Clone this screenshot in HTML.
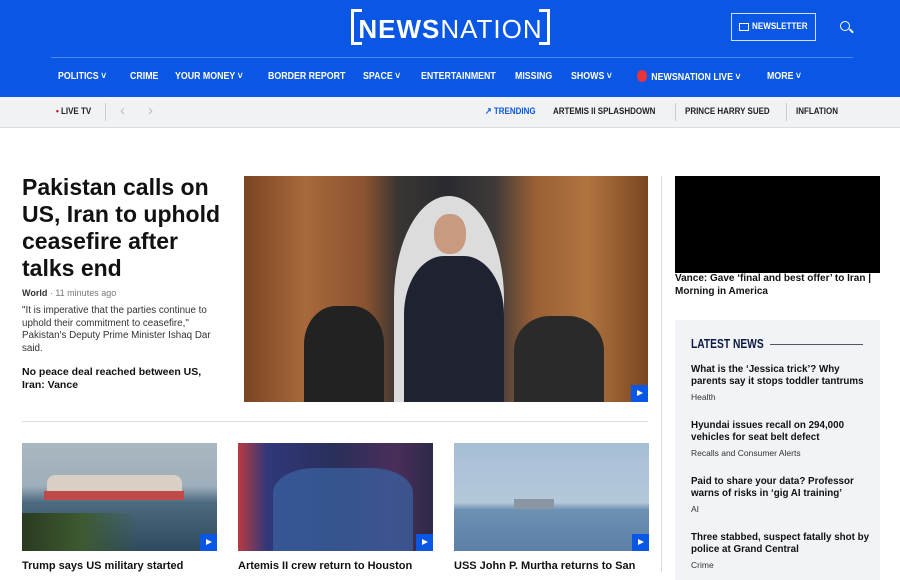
<!DOCTYPE html>
<html><head><meta charset="utf-8"><style>
*{margin:0;padding:0;box-sizing:border-box}
body{width:900px;height:572px;overflow:hidden;background:#fff;font-family:"Liberation Sans",sans-serif;position:relative;color:#111}
.hdr{position:absolute;left:0;top:0;width:900px;height:97px;background:#0a57e6}
.logo{position:absolute;left:351px;top:9px;width:199px;height:36px;border:3px solid #fff;border-top-width:3px}
.logo:before{content:"";position:absolute;left:8px;right:8px;top:-3px;height:3px;background:#0a57e6}
.logo:after{content:"";position:absolute;left:8px;right:8px;bottom:-3px;height:3px;background:#0a57e6}
.logo span{position:absolute;left:0;right:0;top:2px;text-align:center;color:#fff;font-size:26px;letter-spacing:1px;z-index:2}
.nl{position:absolute;left:731px;top:13px;width:85px;height:28px;border:1px solid #cfe0ff}
.nl i{position:absolute;left:20px;top:0;color:#fff;font-size:9.5px;font-weight:bold;line-height:26px;font-style:normal;transform:scaleX(.85);transform-origin:left}
.nl:before{content:"";position:absolute;left:7px;top:9px;width:8px;height:6px;border:1px solid #fff}
.srch{position:absolute;left:840px;top:21px;width:10px;height:10px;border:1.5px solid #fff;border-radius:50%}
.srch:after{content:"";position:absolute;left:8px;top:8px;width:5px;height:1.5px;background:#fff;transform:rotate(45deg)}
.rule{position:absolute;left:51px;top:57px;width:802px;height:1px;background:#4f86f0}
.nav{position:absolute;top:70px;color:#fff;font-size:10.5px;font-weight:bold;white-space:nowrap;transform:scaleX(.84);transform-origin:left}
.bar{position:absolute;left:0;top:97px;width:900px;height:31px;background:#f1f2f4;border-bottom:1px solid #ddd}
.bi{position:absolute;top:106px;font-size:9.5px;font-weight:bold;color:#222;white-space:nowrap;transform:scaleX(.84);transform-origin:left}
h1{position:absolute;left:22px;top:174px;width:200px;font-size:23px;line-height:27px;font-weight:bold;color:#111}
.meta{position:absolute;left:22px;top:288px;font-size:9px;color:#777}
.meta b{color:#333;font-weight:bold}
.dek{position:absolute;left:22px;top:305px;width:204px;font-size:9.8px;line-height:12.5px;color:#333}
.rel{position:absolute;left:22px;top:366px;width:190px;font-size:10.5px;line-height:13px;font-weight:bold}
.ph{position:absolute;overflow:hidden}
.play{position:absolute;right:0;bottom:0;width:17px;height:17px;background:#0a57e6}
.play:after{content:"";position:absolute;left:6px;top:5px;border-left:6px solid #fff;border-top:3.5px solid transparent;border-bottom:3.5px solid transparent}
.cap{position:absolute;top:560px;font-size:11px;font-weight:bold;white-space:nowrap}
.lat{position:absolute;left:675px;top:320px;width:205px;height:260px;background:#f1f3f6}
.li{position:absolute;left:691px;width:180px}
.li b{display:block;font-size:9.8px;line-height:12px;color:#111}
.li span{display:block;font-size:8.5px;color:#333;margin-top:4px}
</style></head><body>
<div class="hdr"></div>
<div class="logo"><span><b>NEWS</b>NATION</span></div>
<div class="nl"><i>NEWSLETTER</i></div>
<div class="srch"></div>
<div class="rule"></div>
<div class="nav" style="left:58px">POLITICS ˅</div>
<div class="nav" style="left:130px">CRIME</div>
<div class="nav" style="left:175px">YOUR MONEY ˅</div>
<div class="nav" style="left:268px">BORDER REPORT</div>
<div class="nav" style="left:363px">SPACE ˅</div>
<div class="nav" style="left:421px">ENTERTAINMENT</div>
<div class="nav" style="left:515px">MISSING</div>
<div class="nav" style="left:571px">SHOWS ˅</div>
<div class="nav" style="left:637px"><span style="display:inline-block;width:12px;height:12px;border-radius:50%;background:#e8343a;vertical-align:-2px;margin-right:5px"></span>NEWSNATION LIVE ˅</div>
<div class="nav" style="left:767px">MORE ˅</div>
<div class="bar"></div>
<div class="bi" style="left:56px"><span style="color:#d00">•</span> LIVE TV</div>
<div style="position:absolute;left:105px;top:103px;width:1px;height:18px;background:#ccc"></div>
<div style="position:absolute;left:120px;top:102px;color:#bbb;font-size:15px">‹</div>
<div style="position:absolute;left:148px;top:102px;color:#bbb;font-size:15px">›</div>
<div class="bi" style="left:485px;color:#0a57e6">↗ TRENDING</div>
<div class="bi" style="left:553px">ARTEMIS II SPLASHDOWN</div>
<div style="position:absolute;left:675px;top:103px;width:1px;height:18px;background:#ccc"></div>
<div class="bi" style="left:685px">PRINCE HARRY SUED</div>
<div style="position:absolute;left:786px;top:103px;width:1px;height:18px;background:#ccc"></div>
<div class="bi" style="left:796px">INFLATION</div>

<h1>Pakistan calls on US, Iran to uphold ceasefire after talks end</h1>
<div class="meta"><b>World</b> · 11 minutes ago</div>
<div class="dek">"It is imperative that the parties continue to uphold their commitment to ceasefire," Pakistan's Deputy Prime Minister Ishaq Dar said.</div>
<div class="rel">No peace deal reached between US, Iran: Vance</div>

<div class="ph" style="left:244px;top:176px;width:404px;height:226px;background:linear-gradient(90deg,#7a4522 0%,#a8693c 15%,#8a5330 30%,#3a3633 38%,#2a2a30 50%,#3e3a38 62%,#9a6035 72%,#b0743f 85%,#7a4522 100%)">
<div style="position:absolute;left:150px;top:20px;width:110px;height:206px;background:#dcdcdc;border-radius:50% 50% 0 0"></div>
<div style="position:absolute;left:160px;top:80px;width:100px;height:146px;background:#1f2230;border-radius:40% 40% 0 0"></div>
<div style="position:absolute;left:190px;top:38px;width:32px;height:40px;background:#c89a80;border-radius:45%"></div>
<div style="position:absolute;left:60px;top:130px;width:80px;height:96px;background:#222;border-radius:40% 40% 0 0"></div>
<div style="position:absolute;left:270px;top:140px;width:90px;height:86px;background:#2a2a2a;border-radius:40% 40% 0 0"></div>
<div class="play"></div></div>

<div style="position:absolute;left:661px;top:176px;width:1px;height:396px;background:#ddd"></div>
<div style="position:absolute;left:675px;top:176px;width:205px;height:97px;background:#000"></div>
<div style="position:absolute;left:675px;top:273px;width:205px;font-size:10px;line-height:12.5px;font-weight:bold">Vance: Gave ‘final and best offer’ to Iran | Morning in America</div>

<div class="lat"></div>
<div style="position:absolute;left:691px;top:337px;font-size:12.5px;font-weight:bold;color:#0d1a44;transform:scaleX(.82);transform-origin:left;white-space:nowrap">LATEST NEWS</div>
<div style="position:absolute;left:770px;top:344px;width:93px;height:1px;background:#556"></div>
<div class="li" style="top:364px"><b>What is the ‘Jessica trick’? Why parents say it stops toddler tantrums</b><span>Health</span></div>
<div class="li" style="top:420px"><b>Hyundai issues recall on 294,000 vehicles for seat belt defect</b><span>Recalls and Consumer Alerts</span></div>
<div class="li" style="top:476px"><b>Paid to share your data? Professor warns of risks in ‘gig AI training’</b><span>AI</span></div>
<div class="li" style="top:532px"><b>Three stabbed, suspect fatally shot by police at Grand Central</b><span>Crime</span></div>

<div style="position:absolute;left:22px;top:421px;width:626px;height:1px;background:#ddd"></div>
<div class="ph" style="left:22px;top:443px;width:195px;height:108px;background:linear-gradient(180deg,#a9b8c0 0%,#9eaebb 40%,#4d6b80 55%,#2e4a5e 100%)">
<div style="position:absolute;left:25px;top:32px;width:135px;height:18px;background:#d9cfc4;border-radius:8px 8px 0 0"></div>
<div style="position:absolute;left:22px;top:48px;width:140px;height:9px;background:#c04a4a"></div>
<div style="position:absolute;left:0;top:70px;width:195px;height:38px;background:linear-gradient(90deg,#2a3a20,#3d5a30 30%,transparent 60%)"></div>
<div class="play"></div></div>
<div class="ph" style="left:238px;top:443px;width:195px;height:108px;background:linear-gradient(90deg,#b83a40 0%,#30387a 15%,#2a2f5a 50%,#4a2e5a 80%,#2e2a48 100%)">
<div style="position:absolute;left:35px;top:25px;width:140px;height:83px;background:#3a5e9c;border-radius:30% 30% 0 0;opacity:.8"></div>
<div class="play"></div></div>
<div class="ph" style="left:454px;top:443px;width:195px;height:108px;background:linear-gradient(180deg,#a6bed6 0%,#b4c8da 55%,#6d90b4 62%,#5b7fa6 100%)">
<div style="position:absolute;left:60px;top:56px;width:40px;height:10px;background:#8a96a2"></div>
<div class="play"></div></div>
<div class="cap" style="left:22px">Trump says US military started</div>
<div class="cap" style="left:238px">Artemis II crew return to Houston</div>
<div class="cap" style="left:454px">USS John P. Murtha returns to San</div>
</body></html>
